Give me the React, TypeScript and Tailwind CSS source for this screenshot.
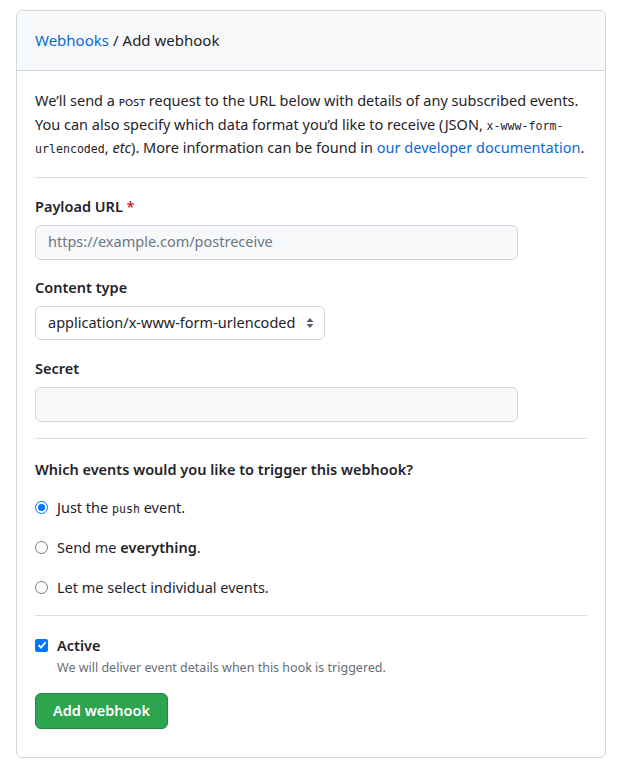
import React from "react";

const font = { fontFamily: '"Noto Sans", "Open Sans", sans-serif' };
const mono = { fontFamily: '"DejaVu Sans Mono", monospace' };

export default function App() {
  return (
    <div className="min-h-screen bg-white pt-[10px] pl-[16px] pr-[20px]" style={font}>
      <div className="border border-[#d0d7de] rounded-[6px] overflow-hidden text-[#1f2328]">
        <div className="h-[60px] bg-[#f6f8fa] border-b border-[#d0d7de] flex items-center px-[18px] text-[15px]">
          <a className="text-[#0969da]">Webhooks</a>
          <span className="mx-[4px]">/</span>
          <span>Add webhook</span>
        </div>
        <div className="px-[18px] pt-[18px] pb-[28px]">
          <p className="text-[14.5px] leading-[23.5px] pb-[17px] border-b border-[#d8dee4]">
            We’ll send a <span className="[font-variant:small-caps] text-[13px] leading-none">post</span> request to the URL below with details of any subscribed events. You can also specify which data format you’d like to receive (JSON,{" "}
            <code className="text-[11.6px] leading-none" style={mono}>x-www-form-urlencoded</code>, <em>etc</em>). More information can be found in{" "}
            <a className="text-[#0969da]">our developer documentation</a>.
          </p>

          <div className="mt-[18px]">
            <label className="block text-[14.5px] font-semibold leading-[21px]">
              Payload URL <span className="text-[#cf222e]">*</span>
            </label>
            <div className="mt-[8px] w-[483px] h-[35px] bg-[#f6f8fa] border border-[#d0d7de] rounded-[6px] flex items-center px-[12px] text-[14.5px] text-[#6e7781]">
              https://example.com/postreceive
            </div>
          </div>

          <div className="mt-[17px]">
            <label className="block text-[14.5px] font-semibold leading-[21px]">Content type</label>
            <div className="mt-[8px] w-[290px] h-[34px] bg-white border border-[#d0d7de] rounded-[6px] flex items-center justify-between pl-[12px] pr-[10px] text-[14.5px]">
              <span>application/x-www-form-urlencoded</span>
              <svg width="8" height="12" viewBox="0 0 8 12" fill="#57606a">
                <path d="M4 1 L7.5 5 H0.5 Z" />
                <path d="M4 11 L7.5 7 H0.5 Z" />
              </svg>
            </div>
          </div>

          <div className="mt-[18px]">
            <label className="block text-[14.5px] font-semibold leading-[21px]">Secret</label>
            <div className="mt-[8px] w-[483px] h-[35px] bg-[#f6f8fa] border border-[#d0d7de] rounded-[6px]" />
          </div>

          <div className="mt-[16px] border-t border-[#d8dee4] pt-[20px]">
            <p className="text-[14.5px] font-semibold leading-[21px]">Which events would you like to trigger this webhook?</p>
            <div className="mt-[17px] flex flex-col gap-[19px] text-[14.5px]">
              <label className="flex items-center gap-[9px] leading-[21px]">
                <span className="w-[13px] h-[13px] rounded-full border-[1.5px] border-[#0075ff] bg-white flex items-center justify-center">
                  <span className="w-[7px] h-[7px] rounded-full bg-[#0075ff]" />
                </span>
                <span>
                  Just the <code className="text-[11.6px] leading-none" style={mono}>push</code> event.
                </span>
              </label>
              <label className="flex items-center gap-[9px] leading-[21px]">
                <span className="w-[13px] h-[13px] rounded-full border border-[#767676] bg-white" />
                <span>
                  Send me <strong className="font-semibold">everything</strong>.
                </span>
              </label>
              <label className="flex items-center gap-[9px] leading-[21px]">
                <span className="w-[13px] h-[13px] rounded-full border border-[#767676] bg-white" />
                <span>Let me select individual events.</span>
              </label>
            </div>
          </div>

          <div className="mt-[17px] border-t border-[#d8dee4] pt-[19px]">
            <div className="flex items-start gap-[9px]">
              <span className="mt-[4px] w-[13px] h-[13px] rounded-[2px] bg-[#0075ff] flex items-center justify-center">
                <svg width="10" height="10" viewBox="0 0 10 10" fill="none" stroke="white" strokeWidth="1.8">
                  <path d="M1.5 5.2 L4 7.6 L8.5 2.2" />
                </svg>
              </span>
              <div>
                <div className="text-[14.5px] font-semibold leading-[21px]">Active</div>
                <div className="mt-[3px] text-[12.5px] text-[#656d76] leading-[18px]">We will deliver event details when this hook is triggered.</div>
              </div>
            </div>
            <button className="mt-[16px] h-[36px] px-[17px] bg-[#2da44e] border border-[#1f883d] rounded-[6px] text-white text-[14.5px] font-semibold">
              Add webhook
            </button>
          </div>
        </div>
      </div>
    </div>
  );
}
